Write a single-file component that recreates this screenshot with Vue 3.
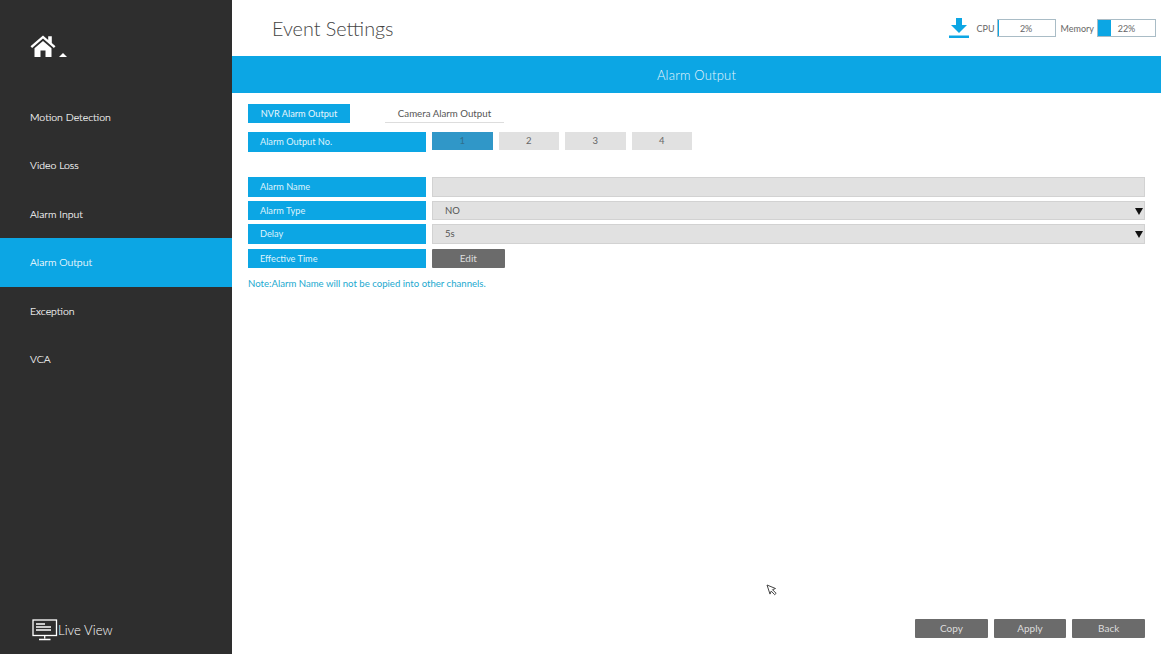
<script setup>
const menu = ['Motion Detection', 'Video Loss', 'Alarm Input', 'Alarm Output', 'Exception', 'VCA']
const activeMenu = 'Alarm Output'
const outputs = [1, 2, 3, 4]
</script>

<template>
  <div class="page">
    <aside class="sidebar">
      <div class="logo">
        <svg class="home" width="26" height="24" viewBox="0 0 26 24">
          <path fill="#fff" d="M0.5 12.2 13 1.5l5.2 4.4V2.2h3.6v6.8l3.7 3.2-1.6 1.8L13 4.6 2.1 14z" />
          <path fill="#fff" d="M4.5 14.2 13 7l8.5 7.2V23h-6v-6.5h-5V23h-6z" />
        </svg>
        <span class="caret"></span>
      </div>
      <nav class="menu">
        <div v-for="item in menu" :key="item" class="menu-item" :class="{ active: item === activeMenu }">{{ item }}</div>
      </nav>
      <div class="live">
        <svg width="26" height="22" viewBox="0 0 26 22">
          <rect x="1" y="1" width="23.5" height="15.5" fill="none" stroke="#fff" stroke-width="1.3" />
          <path stroke="#fff" stroke-width="1.3" d="M4 5h9M4 8h15M4 11h15M12.7 17v2.5M7 20.5h11.5" />
        </svg>
        <span>Live View</span>
      </div>
    </aside>

    <main class="main">
      <header class="header">
        <h1>Event Settings</h1>
        <div class="status">
          <svg class="download" width="20" height="20" viewBox="0 0 20 20">
            <path fill="#0ca6e4" d="M7 0h6v7h5l-8 8-8-8h5zM0 17.5h20V20H0z" />
          </svg>
          <span class="stat-label cpu">CPU</span>
          <div class="meter"><i style="width: 2%"></i><b>2%</b></div>
          <span class="stat-label">Memory</span>
          <div class="meter"><i style="width: 22%"></i><b>22%</b></div>
        </div>
      </header>
      <div class="title-bar">Alarm Output</div>

      <section class="content">
        <div class="tabs">
          <div class="tab on">NVR Alarm Output</div>
          <div class="tab">Camera Alarm Output</div>
        </div>
        <div class="row no-row">
          <div class="label">Alarm Output No.</div>
          <div class="nums">
            <div v-for="n in outputs" :key="n" class="num" :class="{ sel: n === 1 }">{{ n }}</div>
          </div>
        </div>
        <div class="form">
          <div class="row">
            <div class="label">Alarm Name</div>
            <div class="field"></div>
          </div>
          <div class="row">
            <div class="label">Alarm Type</div>
            <div class="field select">NO</div>
          </div>
          <div class="row">
            <div class="label">Delay</div>
            <div class="field select">5s</div>
          </div>
          <div class="row time-row">
            <div class="label">Effective Time</div>
            <button class="btn edit">Edit</button>
          </div>
        </div>
        <p class="note">Note:Alarm Name will not be copied into other channels.</p>
        <div class="actions">
          <button class="btn">Copy</button>
          <button class="btn">Apply</button>
          <button class="btn">Back</button>
        </div>
      </section>
    </main>

    <svg class="cursor" width="12" height="12" viewBox="0 0 12 12">
      <path fill="#fff" stroke="#444" d="M1 1l8.5 3.5-3 1.2 3.6 3.6-1.4 1.4-3.5-3.6-1.2 3z" />
    </svg>
  </div>
</template>

<style scoped>
.page {
  display: flex;
  height: 654px;
  width: 1161px;
  overflow: hidden;
  position: relative;
  background: #fff;
  font-family: Lato, 'Liberation Sans', sans-serif;
  font-size: 11px;
  color: #555;
}
.sidebar {
  width: 232px;
  flex: none;
  background: #2e2e2e;
  display: flex;
  flex-direction: column;
  color: #fff;
}
.logo {
  height: 93px;
  flex: none;
  padding: 34px 0 0 30px;
  box-sizing: border-box;
  display: flex;
  align-items: flex-start;
}
.caret {
  width: 0;
  height: 0;
  margin: 19px 0 0 3px;
  border-left: 4px solid transparent;
  border-right: 4px solid transparent;
  border-bottom: 4px solid #fff;
}
.menu-item {
  height: 48.4px;
  line-height: 49px;
  padding-left: 30px;
  font-size: 10.5px;
  font-weight: 300;
  -webkit-text-stroke: 0.15px #fff;
}
.menu-item.active {
  background: #0ca6e4;
}
.live {
  margin-top: auto;
  padding: 0 0 13px 32px;
  display: flex;
  align-items: center;
  font-size: 13.2px;
  font-weight: 300;
}
.main {
  flex: 1;
  display: flex;
  flex-direction: column;
  min-width: 0;
}
.header {
  height: 56px;
  flex: none;
  display: flex;
  align-items: center;
  justify-content: space-between;
  padding: 0 5px 0 40px;
}
h1 {
  margin: 0;
  font-size: 19.8px;
  font-weight: 300;
  color: #444;
}
.status {
  display: flex;
  align-items: center;
  font-size: 9px;
  color: #666;
}
.download {
  margin-right: 8px;
}
.stat-label {
  margin-right: 3px;
}
.stat-label.cpu {
  margin-right: 2px;
}
.meter {
  width: 59px;
  height: 18px;
  box-sizing: border-box;
  border: 1px solid #a9bcc6;
  position: relative;
  margin-right: 5px;
  text-align: center;
  line-height: 17px;
}
.meter:last-child {
  margin-right: 0;
}
.meter i {
  position: absolute;
  left: 0;
  top: 0;
  bottom: 0;
  background: #0ca6e4;
}
.meter b {
  position: relative;
  font-weight: 400;
}
.title-bar {
  height: 37px;
  flex: none;
  background: #0ca6e4;
  color: #e8f6fd;
  text-align: center;
  line-height: 38px;
  font-size: 13px;
  font-weight: 300;
  letter-spacing: 0.2px;
}
.content {
  flex: 1;
  display: flex;
  flex-direction: column;
  padding: 11px 16px 16px;
}
.tabs {
  display: flex;
  gap: 35px;
  margin-bottom: 9px;
}
.tab {
  height: 19px;
  line-height: 19px;
  color: #555;
  text-align: center;
  box-shadow: inset 0 -1px #ddd;
  width: 119px;
  white-space: nowrap;
  font-size: 9.7px;
}
.tab.on {
  width: 102px;
  background: #0ca6e4;
  color: #e8f6fd;
  box-shadow: none;
  font-size: 9.2px;
}
.row {
  display: flex;
  gap: 6px;
  height: 19.5px;
}
.label {
  width: 178px;
  flex: none;
  background: #0ca6e4;
  color: #dff3fc;
  padding-left: 12px;
  box-sizing: border-box;
  line-height: 19px;
  font-size: 9.2px;
}
.nums {
  display: flex;
  gap: 6px;
  height: 18px;
}
.num {
  width: 60.5px;
  background: #e1e1e1;
  text-align: center;
  line-height: 18px;
  font-size: 9.5px;
  color: #666;
}
.num.sel {
  background: #3097c8;
  color: #2f6f8d;
}
.form {
  margin-top: 25.5px;
  display: flex;
  flex-direction: column;
  gap: 4px;
}
.field {
  flex: 1;
  background: #e1e1e1;
  border: 1px solid #d2d2d2;
  box-sizing: border-box;
  padding-left: 12px;
  line-height: 17px;
  font-size: 9.5px;
  color: #555;
  position: relative;
}
.select::after {
  content: '';
  position: absolute;
  right: 1px;
  top: 6px;
  border-left: 4px solid transparent;
  border-right: 4px solid transparent;
  border-top: 7px solid #111;
}
.time-row {
  margin-top: 1px;
}
.btn {
  width: 72.67px;
  height: 19px;
  padding: 0 0 1px;
  border: 0;
  border-radius: 1px;
  background: #6b6b6b;
  color: #ddd;
  font-family: inherit;
  font-size: 10px;
}
.note {
  margin: 10px 0 0;
  color: #22a9cf;
  font-size: 9.6px;
  line-height: 12px;
}
.actions {
  margin-top: auto;
  display: flex;
  justify-content: flex-end;
  gap: 6px;
}
.cursor {
  position: absolute;
  left: 766px;
  top: 584px;
}
</style>
